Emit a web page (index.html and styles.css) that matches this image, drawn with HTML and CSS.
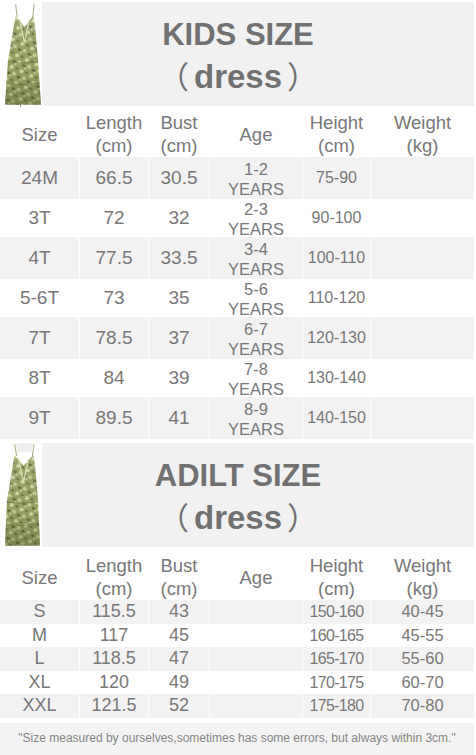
FILE: index.html
```html
<!DOCTYPE html>
<html>
<head>
<meta charset="utf-8">
<link rel="stylesheet" href="styles.css">
</head>
<body>
<div class="page">
  <div class="banner kids-banner">
    <div class="photo">
      <svg class="dress" width="40" height="106" viewBox="0 0 40 106">
        <defs>
          <pattern id="fl1" width="11" height="13" patternUnits="userSpaceOnUse" patternTransform="rotate(25)">
            <rect width="11" height="13" fill="#96a065"/>
            <path d="M1 2 Q4 0 5 3 Q4 6 1 5 Z" fill="#d4d6a6"/>
            <path d="M6 7 Q10 6 10 9 Q8 12 6 10 Z" fill="#c9cc94"/>
            <ellipse cx="8" cy="2.5" rx="1.6" ry="1" fill="#5d6b3c"/>
            <ellipse cx="2.5" cy="10" rx="1.8" ry="1.2" fill="#5a6a3a"/>
            <circle cx="5" cy="12" r="0.9" fill="#e2e2bd"/>
          </pattern>
          <linearGradient id="sh1" x1="0" y1="0" x2="0" y2="1">
            <stop offset="0" stop-color="#ffffff" stop-opacity="0.1"/>
            <stop offset="0.6" stop-color="#3e4a26" stop-opacity="0"/>
            <stop offset="1" stop-color="#3e4a26" stop-opacity="0.35"/>
          </linearGradient>
        </defs>
        <path d="M13 1 L14.5 14 M32 1 L30.5 14" stroke="#a3a87a" stroke-width="1" fill="none"/>
        <path d="M13 13 L22 24 L31 13 L33 24 L36 60 L39 104 L2 104 L5 60 L11 24 Z" fill="url(#fl1)"/>
        <path d="M13 13 L22 24 L31 13 L33 24 L36 60 L39 104 L2 104 L5 60 L11 24 Z" fill="url(#sh1)"/>
        <path d="M5 60 Q21 63 36 60 M3 82 Q21 85 38 82" stroke="#6b7745" stroke-width="0.7" fill="none"/>
        <path d="M17 17 L22 40 L27 17" stroke="#dcdcb4" stroke-width="1.3" fill="none"/>
        <path d="M18 104 L18 106" stroke="#555" stroke-width="0.8"/>
      </svg>
    </div>
    <div class="title-box">
      <div class="t1">KIDS SIZE</div>
      <div class="t2"><span class="paren paren-l">（</span>dress<span class="paren paren-r">）</span></div>
    </div>
  </div>

  <div class="table kids">
    <div class="row head">
      <div class="cell">Size</div>
      <div class="cell">Length<br>(cm)</div>
      <div class="cell">Bust<br>(cm)</div>
      <div class="cell">Age</div>
      <div class="cell">Height<br>(cm)</div>
      <div class="cell">Weight<br>(kg)</div>
    </div>
    <div class="row data alt"><div class="cell">24M</div><div class="cell">66.5</div><div class="cell">30.5</div><div class="cell age">1-2<br>YEARS</div><div class="cell ht">75-90</div><div class="cell"></div></div>
    <div class="row data"><div class="cell">3T</div><div class="cell">72</div><div class="cell">32</div><div class="cell age">2-3<br>YEARS</div><div class="cell ht">90-100</div><div class="cell"></div></div>
    <div class="row data alt"><div class="cell">4T</div><div class="cell">77.5</div><div class="cell">33.5</div><div class="cell age">3-4<br>YEARS</div><div class="cell ht">100-110</div><div class="cell"></div></div>
    <div class="row data"><div class="cell">5-6T</div><div class="cell">73</div><div class="cell">35</div><div class="cell age">5-6<br>YEARS</div><div class="cell ht">110-120</div><div class="cell"></div></div>
    <div class="row data alt"><div class="cell">7T</div><div class="cell">78.5</div><div class="cell">37</div><div class="cell age">6-7<br>YEARS</div><div class="cell ht">120-130</div><div class="cell"></div></div>
    <div class="row data"><div class="cell">8T</div><div class="cell">84</div><div class="cell">39</div><div class="cell age">7-8<br>YEARS</div><div class="cell ht">130-140</div><div class="cell"></div></div>
    <div class="row data alt"><div class="cell">9T</div><div class="cell">89.5</div><div class="cell">41</div><div class="cell age">8-9<br>YEARS</div><div class="cell ht">140-150</div><div class="cell"></div></div>
  </div>

  <div class="banner adult-banner">
    <div class="photo">
      <svg class="dress dress2" width="40" height="110" viewBox="0 0 40 110">
        <defs>
          <pattern id="fl2" width="11" height="13" patternUnits="userSpaceOnUse" patternTransform="rotate(25)">
            <rect width="11" height="13" fill="#96a065"/>
            <path d="M1 2 Q4 0 5 3 Q4 6 1 5 Z" fill="#d4d6a6"/>
            <path d="M6 7 Q10 6 10 9 Q8 12 6 10 Z" fill="#c9cc94"/>
            <ellipse cx="8" cy="2.5" rx="1.6" ry="1" fill="#5d6b3c"/>
            <ellipse cx="2.5" cy="10" rx="1.8" ry="1.2" fill="#5a6a3a"/>
            <circle cx="5" cy="12" r="0.9" fill="#e2e2bd"/>
          </pattern>
          <linearGradient id="sh2" x1="0" y1="0" x2="0" y2="1">
            <stop offset="0" stop-color="#ffffff" stop-opacity="0.1"/>
            <stop offset="0.6" stop-color="#3e4a26" stop-opacity="0"/>
            <stop offset="1" stop-color="#3e4a26" stop-opacity="0.35"/>
          </linearGradient>
        </defs>
        <path d="M13 3 Q21 0 31 3 L29 11 L15 11 Z" fill="#eeeeee"/>
        <path d="M12 3 L14 15 M32 3 L30 15" stroke="#a3a87a" stroke-width="1" fill="none"/>
        <path d="M12 14 L21 25 L31 14 L33 25 L36 62 L38 107 L2 107 L4 62 L10 25 Z" fill="url(#fl2)"/>
        <path d="M12 14 L21 25 L31 14 L33 25 L36 62 L38 107 L2 107 L4 62 L10 25 Z" fill="url(#sh2)"/>
        <path d="M4 62 Q20 65 36 62 M3 85 Q20 88 37 85" stroke="#6b7745" stroke-width="0.7" fill="none"/>
        <path d="M16 18 L21 42 L26 18" stroke="#dcdcb4" stroke-width="1.3" fill="none"/>
      </svg>
    </div>
    <div class="title-box">
      <div class="t1">ADILT SIZE</div>
      <div class="t2"><span class="paren paren-l">（</span>dress<span class="paren paren-r">）</span></div>
    </div>
  </div>

  <div class="table adult">
    <div class="row head">
      <div class="cell">Size</div>
      <div class="cell">Length<br>(cm)</div>
      <div class="cell">Bust<br>(cm)</div>
      <div class="cell">Age</div>
      <div class="cell">Height<br>(cm)</div>
      <div class="cell">Weight<br>(kg)</div>
    </div>
    <div class="row data alt"><div class="cell">S</div><div class="cell">115.5</div><div class="cell">43</div><div class="cell"></div><div class="cell ht">150-160</div><div class="cell wt">40-45</div></div>
    <div class="row data"><div class="cell">M</div><div class="cell">117</div><div class="cell">45</div><div class="cell"></div><div class="cell ht">160-165</div><div class="cell wt">45-55</div></div>
    <div class="row data alt"><div class="cell">L</div><div class="cell">118.5</div><div class="cell">47</div><div class="cell"></div><div class="cell ht">165-170</div><div class="cell wt">55-60</div></div>
    <div class="row data"><div class="cell">XL</div><div class="cell">120</div><div class="cell">49</div><div class="cell"></div><div class="cell ht">170-175</div><div class="cell wt">60-70</div></div>
    <div class="row data alt"><div class="cell">XXL</div><div class="cell">121.5</div><div class="cell">52</div><div class="cell"></div><div class="cell ht">175-180</div><div class="cell wt">70-80</div></div>
  </div>

  <div class="note">"Size measured by ourselves,sometimes has some errors, but always within 3cm."</div>
</div>
</body>
</html>
```

FILE: styles.css
```css
html, body {
  margin: 0;
  padding: 0;
  background: #ffffff;
}

.page {
  width: 476px;
  font-family: "Liberation Sans", Arial, "Noto Sans CJK SC", sans-serif;
  color: #787878;
}

.banner {
  display: flex;
  align-items: flex-start;
  height: 104px;
}

.kids-banner {
  margin-top: 2px;
}

.adult-banner {
  margin-top: 6px;
}

.photo {
  width: 42px;
  flex: 0 0 42px;
  display: flex;
  justify-content: flex-start;
  padding-left: 3px;
  box-sizing: border-box;
}

.dress {
  display: block;
}

.dress2 {
  margin-top: -3px;
}

.title-box {
  flex: 1;
  height: 104px;
  margin-right: 2px;
  background: #f1f1f1;
  box-sizing: border-box;
  padding-top: 15px;
  padding-right: 40px;
  text-align: center;
  color: #717171;
  font-weight: bold;
  white-space: nowrap;
}

.t1 {
  font-size: 31px;
  line-height: 36px;
}

.t2 {
  font-size: 33px;
  line-height: 44px;
}

.paren {
  font-family: "Noto Sans CJK SC", sans-serif;
  font-weight: normal;
  font-size: 31px;
}

.paren-l {
  margin-right: 5px;
}

.paren-r {
  margin-left: 5px;
}

.row {
  display: grid;
  grid-template-columns: 79px 68px 60px 92px 67px 103px;
  column-gap: 1px;
}

.cell {
  display: flex;
  flex-direction: column;
  align-items: center;
  justify-content: center;
  text-align: center;
  white-space: nowrap;
}

.head .cell {
  font-size: 18.5px;
  line-height: 23px;
  box-sizing: border-box;
}

.kids .head {
  height: 51px;
}

.kids .head .cell {
  padding-top: 5px;
}

.kids .data {
  height: 40px;
}

.kids .data .cell {
  font-size: 19px;
}

.kids .data .cell.age {
  font-size: 16.5px;
  line-height: 20px;
  padding-top: 2px;
  box-sizing: border-box;
}

.kids .data .cell.ht {
  font-size: 16px;
}

.row.alt .cell {
  background: #f2f2f2;
}

.adult .head {
  height: 53px;
}

.adult .head .cell {
  padding-top: 7px;
}

.adult .data {
  height: 23.6px;
}

.adult .data .cell {
  font-size: 18px;
  line-height: 23.6px;
}

.adult .data .cell.ht {
  font-size: 16px;
  letter-spacing: -0.7px;
}

.adult .data .cell.wt {
  font-size: 16.5px;
}

.note {
  margin-top: 5px;
  margin-right: 2px;
  height: 32px;
  background: #f3f3f3;
  font-size: 12px;
  line-height: 31px;
  text-align: center;
  color: #858585;
}
```
